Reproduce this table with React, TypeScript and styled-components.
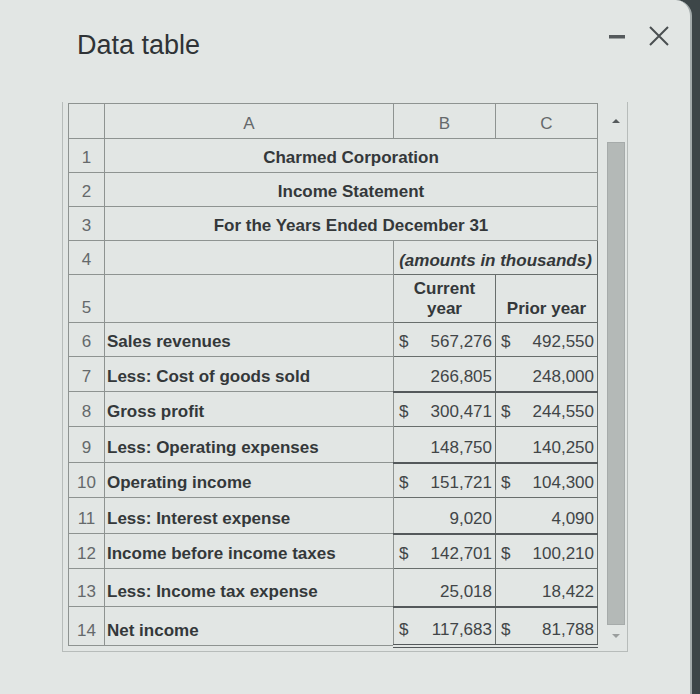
import React from "react";
import styled, { createGlobalStyle, css } from "styled-components";

type Rule = "none" | "single" | "double";

interface LineItem {
  n: number;
  label: string;
  cur: string;
  prior: string;
  dollar?: boolean;
  rule?: Rule;
  h: number;
}

const items: LineItem[] = [
  { n: 6, label: "Sales revenues", cur: "567,276", prior: "492,550", dollar: true, h: 34 },
  { n: 7, label: "Less: Cost of goods sold", cur: "266,805", prior: "248,000", rule: "single", h: 35 },
  { n: 8, label: "Gross profit", cur: "300,471", prior: "244,550", dollar: true, h: 35 },
  { n: 9, label: "Less: Operating expenses", cur: "148,750", prior: "140,250", rule: "single", h: 36 },
  { n: 10, label: "Operating income", cur: "151,721", prior: "104,300", dollar: true, h: 35 },
  { n: 11, label: "Less: Interest expense", cur: "9,020", prior: "4,090", rule: "single", h: 36 },
  { n: 12, label: "Income before income taxes", cur: "142,701", prior: "100,210", dollar: true, h: 35 },
  { n: 13, label: "Less: Income tax expense", cur: "25,018", prior: "18,422", rule: "single", h: 38 },
  { n: 14, label: "Net income", cur: "117,683", prior: "81,788", dollar: true, rule: "double", h: 39 },
];

const GlobalStyle = createGlobalStyle`
  html, body {
    margin: 0;
    padding: 0;
    background: #3d4648;
  }
  body {
    font-family: "Liberation Sans", Arial, sans-serif;
  }
`;

const Dialog = styled.div`
  width: 692px;
  height: 700px;
  background: #e2e6e4;
  border-top-right-radius: 16px;
  border-right: 2px solid #a3abab;
  box-sizing: border-box;
  overflow: hidden;
`;

const TitleBar = styled.div`
  display: flex;
  align-items: center;
  height: 90px;
  padding: 0 20px 0 77px;
`;

const Title = styled.h1`
  margin: 0;
  font-size: 27px;
  font-weight: normal;
  color: #2f3336;
  flex: 1;
`;

const Controls = styled.div`
  display: flex;
  align-items: center;
  gap: 22px;
  margin-bottom: 18px;
`;

const Frame = styled.div`
  display: flex;
  width: 566px;
  height: 550px;
  margin: 12px 0 0 62px;
  border: 1px solid #b7bcba;
  border-top: none;
  padding: 1px 0 6px 5px;
  box-sizing: border-box;
`;

const Sheet = styled.table`
  border-collapse: collapse;
  table-layout: fixed;
  width: 529px;
  font-size: 17px;
  line-height: 20px;
  color: #34383a;
`;

const Row = styled.tr<{ $h: number }>`
  height: ${(p) => p.$h}px;
`;

const baseCell = css`
  border: 1px solid #8e9391;
  padding: 0 3px 4px 3px;
  vertical-align: bottom;
  white-space: nowrap;
  overflow: hidden;
`;

const ColHead = styled.th`
  ${baseCell};
  font-weight: normal;
  color: #65696b;
  text-align: center;
`;

const RowNum = styled.td`
  ${baseCell};
  color: #65696b;
  text-align: center;
  padding: 0 0 4px 0;
`;

const TitleCell = styled.td`
  ${baseCell};
  font-weight: bold;
  text-align: center;
`;

const LabelCell = styled.td`
  ${baseCell};
  font-weight: bold;
  padding-left: 2px;
`;

const HeadingCell = styled.td<{ $italic?: boolean; $align?: string }>`
  ${baseCell};
  border-color: #686e6c;
  font-weight: bold;
  font-style: ${(p) => (p.$italic ? "italic" : "normal")};
  text-align: ${(p) => p.$align || "center"};
  padding-bottom: 3px;
`;

const AmountCell = styled.td<{ $rule: Rule }>`
  ${baseCell};
  border-color: #686e6c;
  color: #414547;
  padding: 0 3px 4px 5px;
  ${(p) =>
    p.$rule === "single" &&
    css`
      border-bottom: 2px solid #54595b;
    `}
  ${(p) =>
    p.$rule === "double" &&
    css`
      border-bottom: 4px double #54595b;
    `}
`;

const Amount = styled.span`
  display: flex;
  justify-content: space-between;
`;

const ScrollColumn = styled.div`
  flex: 1;
  display: flex;
  flex-direction: column;
  padding: 0 2px 0 9px;
`;

const ScrollButton = styled.div<{ $h: number }>`
  height: ${(p) => p.$h}px;
  display: flex;
  align-items: center;
  justify-content: center;
`;

const Arrow = styled.span<{ $down?: boolean }>`
  width: 0;
  height: 0;
  border-left: 4px solid transparent;
  border-right: 4px solid transparent;
  ${(p) =>
    p.$down
      ? css`
          border-top: 4px solid #9a9e9d;
        `
      : css`
          border-bottom: 4px solid #555a5c;
        `}
`;

const Thumb = styled.div`
  flex: 1;
  margin: 4px 0 2px 0;
  background: #b4b9b7;
  border: 1px solid #a6abaa;
`;

const MinimizeIcon = () => (
  <svg width="18" height="18" viewBox="0 0 18 18">
    <rect x="1" y="8" width="16" height="3.5" fill="#555a5c" />
  </svg>
);

const CloseIcon = () => (
  <svg width="22" height="22" viewBox="0 0 22 22">
    <path d="M2 2 L20 20 M20 2 L2 20" stroke="#4a4f51" strokeWidth="2" />
  </svg>
);

const App: React.FC = () => {
  return (
    <>
      <GlobalStyle />
      <Dialog>
        <TitleBar>
          <Title>Data table</Title>
          <Controls>
            <MinimizeIcon />
            <CloseIcon />
          </Controls>
        </TitleBar>
        <Frame>
          <Sheet>
            <colgroup>
              <col style={{ width: 36 }} />
              <col style={{ width: 289 }} />
              <col style={{ width: 102 }} />
              <col style={{ width: 102 }} />
            </colgroup>
            <tbody>
              <Row $h={35}>
                <ColHead />
                <ColHead>A</ColHead>
                <ColHead>B</ColHead>
                <ColHead>C</ColHead>
              </Row>
              <Row $h={34}>
                <RowNum>1</RowNum>
                <TitleCell colSpan={3}>Charmed Corporation</TitleCell>
              </Row>
              <Row $h={34}>
                <RowNum>2</RowNum>
                <TitleCell colSpan={3}>Income Statement</TitleCell>
              </Row>
              <Row $h={34}>
                <RowNum>3</RowNum>
                <TitleCell colSpan={3}>For the Years Ended December 31</TitleCell>
              </Row>
              <Row $h={34}>
                <RowNum>4</RowNum>
                <LabelCell />
                <HeadingCell colSpan={2} $italic>
                  (amounts in thousands)
                </HeadingCell>
              </Row>
              <Row $h={48}>
                <RowNum>5</RowNum>
                <LabelCell />
                <HeadingCell>
                  Current
                  <br />
                  year
                </HeadingCell>
                <HeadingCell>Prior year</HeadingCell>
              </Row>
              {items.map((it) => (
                <Row key={it.n} $h={it.h}>
                  <RowNum>{it.n}</RowNum>
                  <LabelCell>{it.label}</LabelCell>
                  <AmountCell $rule={it.rule || "none"}>
                    <Amount>
                      <span>{it.dollar ? "$" : ""}</span>
                      <span>{it.cur}</span>
                    </Amount>
                  </AmountCell>
                  <AmountCell $rule={it.rule || "none"}>
                    <Amount>
                      <span>{it.dollar ? "$" : ""}</span>
                      <span>{it.prior}</span>
                    </Amount>
                  </AmountCell>
                </Row>
              ))}
            </tbody>
          </Sheet>
          <ScrollColumn>
            <ScrollButton $h={35}>
              <Arrow />
            </ScrollButton>
            <Thumb />
            <ScrollButton $h={18}>
              <Arrow $down />
            </ScrollButton>
          </ScrollColumn>
        </Frame>
      </Dialog>
    </>
  );
};

export default App;
